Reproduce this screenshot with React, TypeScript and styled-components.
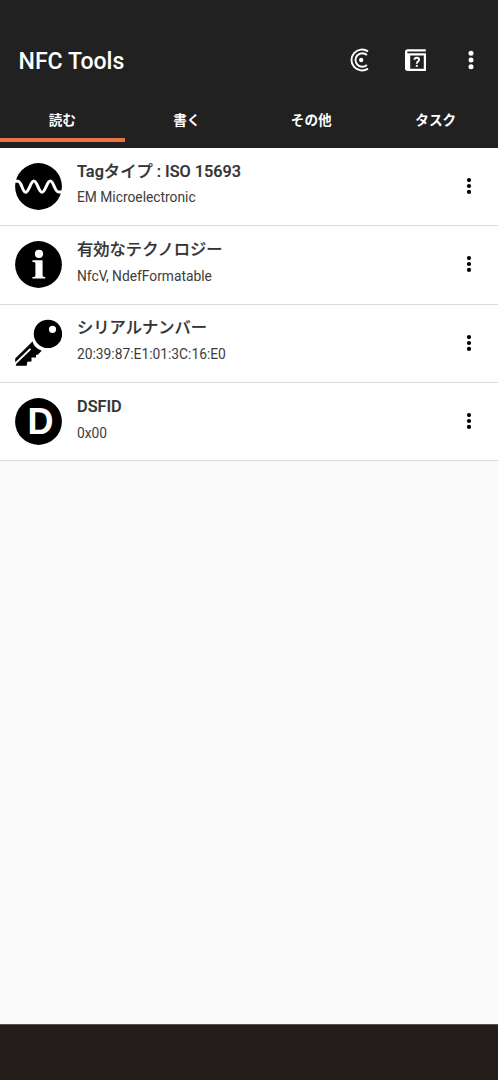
import React from 'react';
import styled, { createGlobalStyle } from 'styled-components';

const GlobalStyle = createGlobalStyle`
  * { box-sizing: border-box; }
  body {
    margin: 0;
    background: #fafafa;
    font-family: Roboto, "Noto Sans CJK JP", sans-serif;
  }
`;

const Screen = styled.div`
  display: flex;
  flex-direction: column;
  width: 100%;
  height: 1080px;
  overflow: hidden;
  background: #fafafa;
`;

const AppBar = styled.header`
  flex: none;
  height: 148px;
  padding-top: 31px;
  background: #212121;
  color: #fff;
`;

const Toolbar = styled.div`
  display: flex;
  align-items: center;
  height: 58px;
  padding: 0 15.5px 0 18.5px;
`;

const AppTitle = styled.h1`
  flex: 1;
  margin: 0;
  padding-top: 3px;
  font-size: 23.1px;
  font-weight: 500;
  line-height: 28px;
`;

const ToolbarActions = styled.div`
  display: flex;
  align-items: center;
  gap: 32px;
`;

const IconButton = styled.button<{ $color: string; $size: number }>`
  display: flex;
  align-items: center;
  justify-content: center;
  width: ${(p) => p.$size}px;
  height: ${(p) => p.$size}px;
  padding: 0;
  border: 0;
  background: none;
  color: ${(p) => p.$color};
`;

const TabBar = styled.nav`
  display: grid;
  grid-template-columns: repeat(4, 1fr);
  height: 53px;
`;

const Tab = styled.div<{ $active?: boolean }>`
  display: flex;
  align-items: center;
  justify-content: center;
  padding-top: 11px;
  border-bottom: 4px solid ${(p) => (p.$active ? '#ea7243' : 'transparent')};
  font-size: 13.6px;
  font-weight: 700;
`;

const List = styled.main`
  flex: 1;
`;

const Row = styled.section`
  display: flex;
  align-items: flex-start;
  height: 78.37px;
  padding: 14.5px 17px 0 15px;
  border-bottom: 1.4px solid #dcdcdc;
  background: #fff;
`;

const RowText = styled.div`
  flex: 1;
  padding-left: 15px;
`;

const RowTitle = styled.div`
  height: 22px;
  margin-top: -2px;
  font-size: 16.3px;
  font-weight: 500;
  line-height: 22px;
  white-space: nowrap;
  color: #333;
  -webkit-text-stroke: 0.2px #333;
`;

const RowDetail = styled.div`
  margin-top: 5.95px;
  font-size: 13.8px;
  line-height: 18px;
  color: #3c3c3c;
`;

const RowMenu = styled.div`
  padding-top: 11.5px;
`;

const NavigationBar = styled.footer`
  flex: none;
  height: 56px;
  border-top: 1px solid #55524e;
  background: #221d1a;
`;

const Dots = ({ r, gap, size }: { r: number; gap: number; size: number }) => (
  <svg width={size} height={size} viewBox="0 0 24 24" fill="currentColor">
    <circle cx="12" cy={12 - gap} r={r} />
    <circle cx="12" cy="12" r={r} />
    <circle cx="12" cy={12 + gap} r={r} />
  </svg>
);

const SignalIcon = () => (
  <svg width="24" height="24" viewBox="0 0 24 24" fill="none" stroke="currentColor">
    <path d="M21 3.4A10.5 10.5 0 1 0 21 20.6" strokeWidth="1.9" />
    <path d="M19.9 7A6.8 6.8 0 1 0 19.9 17" strokeWidth="1.9" />
    <circle cx="14.2" cy="12" r="2.2" fill="currentColor" stroke="none" />
  </svg>
);

const HelpBookIcon = () => (
  <svg width="24" height="24" viewBox="0 0 24 24" fill="none" stroke="currentColor">
    <g transform="translate(0.8 0)">
      <path
        d="M22 1.2H4Q1.2 1.2 1.2 4V20.3Q1.2 23 4 23H22.2V5.2H4.2Q3.4 5.2 3.4 4.3T4.2 3.4H22ZM6.4 7.4H20V20.8H6.4Z"
        fill="currentColor"
        fillRule="evenodd"
        stroke="none"
      />
      <path d="M10.7 11.7Q10.7 9.7 13 9.7T15.3 11.6Q15.3 12.7 14.2 13.5T13 15.8" strokeWidth="1.9" />
      <path d="M13 16.9V18.8" strokeWidth="2" />
    </g>
  </svg>
);

const WaveIcon = () => (
  <svg width="47" height="47" viewBox="0 0 47 47">
    <circle cx="23.5" cy="23.5" r="23.4" />
    <path
      d="M0 18.2H3C6.6 18.2 7.4 29.2 10.6 29.2C14 29.2 15.6 18 18.9 18C22.3 18 23.6 29.2 27 29.2C30.4 29.2 31.9 18 35.3 18C38.8 18 39.6 29 43.6 29H47"
      fill="none"
      stroke="#fff"
      strokeWidth="3"
    />
  </svg>
);

const InfoIcon = () => (
  <svg width="47" height="47" viewBox="0 0 47 47">
    <circle cx="23.5" cy="23.5" r="23.4" />
    <circle cx="24" cy="12.8" r="4.1" fill="#fff" />
    <path d="M17.4 19.2H27.6V34.5Q27.6 36 30.3 36V37.6H17.4V36Q20.4 36 20.4 34.5V22.6Q20.4 20.9 17.4 20.8Z" fill="#fff" />
  </svg>
);

const KeyIcon = () => (
  <svg width="47" height="47" viewBox="0 0 47 47">
    <path
      d="M33 0.7A14.2 14.2 0 1 0 33 29.1A14.2 14.2 0 1 0 33 0.7ZM37.5 6.7A3.6 3.6 0 1 1 37.5 13.9A3.6 3.6 0 1 1 37.5 6.7Z"
      fillRule="evenodd"
    />
    <path d="M17.5 22.5Q19.3 29 26.7 31.8L23 35.5L21 36V38.5H16.5V42.5L12.3 42.8L11.7 46.8H0.7L1.4 44.8L16.2 30.5L14.9 29.2L0.2 43.3V39.5Z" />
  </svg>
);

const LetterDIcon = () => (
  <svg width="47" height="47" viewBox="0 0 47 47">
    <circle cx="23.5" cy="23.5" r="23.4" />
    <text
      x="25.5"
      y="36"
      textAnchor="middle"
      fill="#fff"
      fontFamily="Liberation Sans, sans-serif"
      fontWeight="700"
      fontSize="36"
    >
      D
    </text>
  </svg>
);

const tabs = ['読む', '書く', 'その他', 'タスク'];

const rows = [
  { icon: <WaveIcon />, title: 'Tagタイプ : ISO 15693', detail: 'EM Microelectronic' },
  { icon: <InfoIcon />, title: '有効なテクノロジー', detail: 'NfcV, NdefFormatable' },
  { icon: <KeyIcon />, title: 'シリアルナンバー', detail: '20:39:87:E1:01:3C:16:E0' },
  { icon: <LetterDIcon />, title: 'DSFID', detail: '0x00' },
];

export default function App() {
  return (
    <Screen>
      <GlobalStyle />
      <AppBar>
        <Toolbar>
          <AppTitle>NFC Tools</AppTitle>
          <ToolbarActions>
            <IconButton $color="#fff" $size={24}><SignalIcon /></IconButton>
            <IconButton $color="#fff" $size={24}><HelpBookIcon /></IconButton>
            <IconButton $color="#fff" $size={24}><Dots r={2.5} gap={6.8} size={24} /></IconButton>
          </ToolbarActions>
        </Toolbar>
        <TabBar>
          {tabs.map((label, i) => (
            <Tab key={label} $active={i === 0}>{label}</Tab>
          ))}
        </TabBar>
      </AppBar>
      <List>
        {rows.map((row) => (
          <Row key={row.title}>
            {row.icon}
            <RowText>
              <RowTitle>{row.title}</RowTitle>
              <RowDetail>{row.detail}</RowDetail>
            </RowText>
            <RowMenu>
              <IconButton $color="#000" $size={24}><Dots r={2.1} gap={5.9} size={24} /></IconButton>
            </RowMenu>
          </Row>
        ))}
      </List>
      <NavigationBar />
    </Screen>
  );
}
